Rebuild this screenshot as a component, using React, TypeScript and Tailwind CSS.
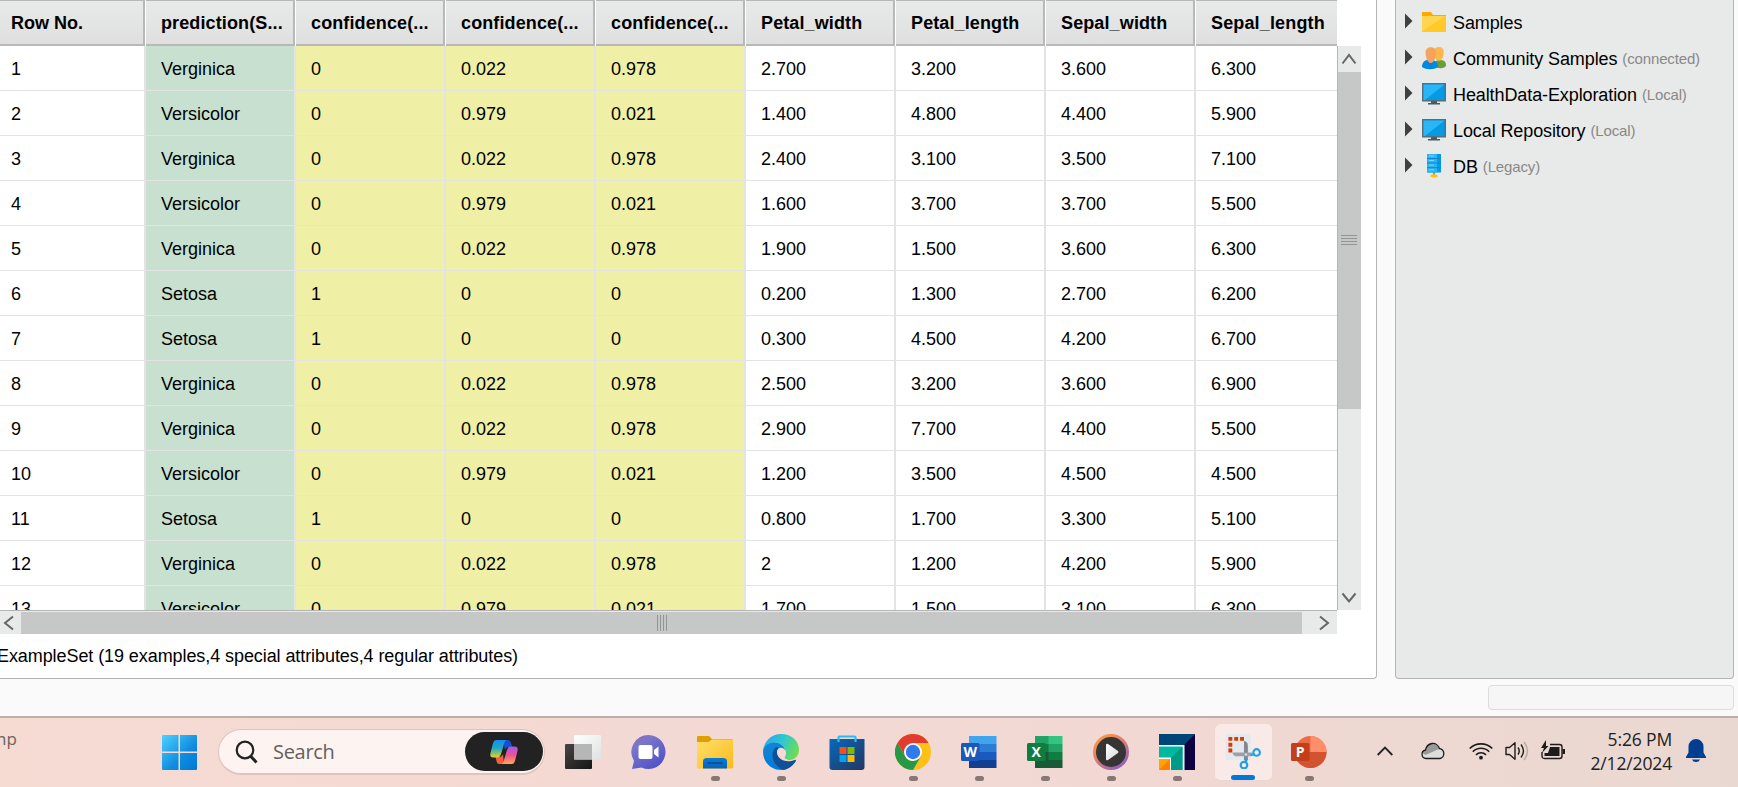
import React from 'react';

const HEADERS = ['Row No.', 'prediction(S...', 'confidence(...', 'confidence(...', 'confidence(...', 'Petal_width', 'Petal_length', 'Sepal_width', 'Sepal_length'];

const ROWS: string[][] = [
  ['1', 'Verginica', '0', '0.022', '0.978', '2.700', '3.200', '3.600', '6.300'],
  ['2', 'Versicolor', '0', '0.979', '0.021', '1.400', '4.800', '4.400', '5.900'],
  ['3', 'Verginica', '0', '0.022', '0.978', '2.400', '3.100', '3.500', '7.100'],
  ['4', 'Versicolor', '0', '0.979', '0.021', '1.600', '3.700', '3.700', '5.500'],
  ['5', 'Verginica', '0', '0.022', '0.978', '1.900', '1.500', '3.600', '6.300'],
  ['6', 'Setosa', '1', '0', '0', '0.200', '1.300', '2.700', '6.200'],
  ['7', 'Setosa', '1', '0', '0', '0.300', '4.500', '4.200', '6.700'],
  ['8', 'Verginica', '0', '0.022', '0.978', '2.500', '3.200', '3.600', '6.900'],
  ['9', 'Verginica', '0', '0.022', '0.978', '2.900', '7.700', '4.400', '5.500'],
  ['10', 'Versicolor', '0', '0.979', '0.021', '1.200', '3.500', '4.500', '4.500'],
  ['11', 'Setosa', '1', '0', '0', '0.800', '1.700', '3.300', '5.100'],
  ['12', 'Verginica', '0', '0.022', '0.978', '2', '1.200', '4.200', '5.900'],
  ['13', 'Versicolor', '0', '0.979', '0.021', '1.700', '1.500', '3.100', '6.300'],
];

function cellColor(col: number) {
  if (col === 1) return 'bg-[#c7e0cf]';
  if (col >= 2 && col <= 4) return 'bg-[#efefa5]';
  return 'bg-white';
}

function Arrow({ d }: { d: string }) {
  return (
    <svg width="16" height="16" viewBox="0 0 16 16" fill="none" stroke="#666" strokeWidth="2">
      <path d={d} />
    </svg>
  );
}

function DataTable() {
  return (
    <div className="flex h-[634px] w-[1362px]">
      <div className="w-[1337px] shrink-0 overflow-hidden">
        <div className="flex h-[46px] w-[1346px]">
          {HEADERS.map((h, i) => (
            <div key={i} className={`flex shrink-0 ${i === 0 ? 'w-[146px]' : 'w-[150px]'} border-r border-white`}>
              <div
                className={`flex h-[46px] flex-1 items-center border-t border-r-2 border-b-2 border-[#b8b8b8] bg-linear-to-b from-[#e8eaea] to-[#dfdfdf] pt-[2px] text-[18px] font-bold whitespace-nowrap ${
                  i === 0 ? 'pl-[11px]' : i === 8 ? 'pl-[15px] tracking-[0.15px]' : 'pl-[15px] tracking-[0.12px]'
                }`}
              >
                {h}
              </div>
            </div>
          ))}
        </div>
        <div className="h-[564px] w-[1346px] overflow-hidden">
          {ROWS.map((r, ri) => (
            <div key={ri} className="flex h-[45px]">
              {r.map((c, ci) => (
                <div
                  key={ci}
                  className={`flex shrink-0 items-center border-r-2 border-b border-[#e3e3e3] pt-[2px] text-[18px] ${
                    ci === 0 ? 'w-[146px] pl-[11px]' : 'w-[150px] pl-[15px]'
                  } ${cellColor(ci)}`}
                >
                  {c}
                </div>
              ))}
            </div>
          ))}
        </div>
        <div className="flex h-[24px] border-t border-[#b4b4b4] bg-[#e8eaea] pt-px">
          <div className="flex w-[21px] items-center">
            <Arrow d="M13 1.5L5 8l8 6.5" />
          </div>
          <div className="flex h-[22px] w-[1281px] items-center justify-center gap-[2px] bg-[#c6c8c7]">
            {[0, 1, 2, 3].map((n) => (
              <span key={n} className="h-4 w-px bg-[#939595]" />
            ))}
          </div>
          <div className="flex flex-1 items-center pl-[15px]">
            <Arrow d="M3 1.5L11 8l-8 6.5" />
          </div>
        </div>
      </div>
      <div className="mt-[46px] flex h-[564px] w-[24px] flex-col border-l border-[#b4b4b4] bg-[#e8eaea]">
        <div className="flex h-[26px] items-center pl-[3px]">
          <Arrow d="M1.5 12.500L8 4l6.500 8.500" />
        </div>
        <div className="flex h-[337px] flex-col gap-[2px] bg-[#c6c8c7] pt-[163px] pl-[3px]">
          {[0, 1, 2, 3].map((n) => (
            <span key={n} className="h-px w-4 bg-[#939595]" />
          ))}
        </div>
        <div className="flex flex-1 items-end pb-1 pl-[3px]">
          <Arrow d="M1.500 3.500L8 11.500l6.500-8" />
        </div>
      </div>
    </div>
  );
}

function FolderSmall() {
  return (
    <svg width="24" height="22" viewBox="0 0 24 22">
      <path d="M0 1h9l2 3h13v5H0z" fill="#ffa900" />
      <path d="M0 5h24v16H0z" fill="#ffca28" />
      <path d="M0 5h23L1 20H0z" fill="#ffd54f" />
    </svg>
  );
}

function People() {
  return (
    <svg width="24" height="24" viewBox="0 0 24 24">
      <path d="M12 20c0-5 3-6 6-6s6 1 6 5c0 3-5 3.500-8 3z" fill="#689f38" />
      <path d="M12 4C13-.3 21.500-.3 21.700 5c.3 5-1.200 8-3.200 9.500C16 15.500 12.500 13 12 10z" fill="#ffb74d" />
      <path d="M0 21c0-5 3-6.500 5-7h6c3 1 5 2.500 5 7-4 3-12 3-16 0z" fill="#0288e0" />
      <path d="M3.500 6C3.500-.5 14-.5 14 6c0 5-2 11-5.200 11S3.500 11 3.500 6z" fill="#f8a35c" />
    </svg>
  );
}

function Monitor() {
  return (
    <svg width="24" height="22" viewBox="0 0 24 22">
      <path d="M9 18h6v2h3v1.500H6V20h3z" fill="#455a64" />
      <path d="M0 0h24v18.500H0z" fill="#546e7a" />
      <path d="M1.500 1.500h21v15.500h-21z" fill="#039be5" />
      <path d="M1.500 1.500h21L3 17H1.500z" fill="#29b6f6" />
    </svg>
  );
}

function Database() {
  return (
    <svg width="24" height="24" viewBox="0 0 24 24">
      <path d="M12 18v4" stroke="#607d8b" strokeWidth="1.500" />
      <path d="M5 0h14v18.500H5z" fill="#039be5" />
      <path d="M5 0h10v18.500H5z" fill="#29b6f6" />
      <path d="M5 4.500h14M5 9h14M5 13.700h14" stroke="#0b86cc" />
      <path d="M7 2h5M7 6.500h5M7 11h5M7 15.800h5" stroke="#81d4fa" />
      <path d="M8 22c2-2.500 6-2.500 8 0-2 2-6 2-8 0z" fill="#ffc107" />
    </svg>
  );
}

const REPOS = [
  { name: 'Samples', note: '', icon: <FolderSmall /> },
  { name: 'Community Samples', note: '(connected)', icon: <People /> },
  { name: 'HealthData-Exploration', note: '(Local)', icon: <Monitor /> },
  { name: 'Local Repository', note: '(Local)', icon: <Monitor /> },
  { name: 'DB', note: '(Legacy)', icon: <Database /> },
];

function RepositoryPanel() {
  return (
    <div className="h-[679px] w-[339px] rounded-b-[4px] border border-t-0 border-[#b4b4b4] bg-[#e8eae9] pt-[4px] pl-[9px]">
      {REPOS.map((r) => (
        <div key={r.name} className="flex h-[36px] items-center whitespace-nowrap">
          <svg width="8" height="16" viewBox="0 0 8 16" className="mb-[3px]">
            <path d="M0 .5L7.500 8 0 15.500z" fill="#404040" />
          </svg>
          <span className="ml-[9px] flex w-[24px] justify-center">{r.icon}</span>
          <span className="ml-[7px] pt-[2px] text-[18px] tracking-[-0.1px]">{r.name}</span>
          <span className="ml-[5px] pt-[3px] text-[15px] tracking-[-0.15px] text-[#888]">{r.note}</span>
        </div>
      ))}
    </div>
  );
}

function TaskView() {
  return (
    <svg width="36" height="36" viewBox="0 0 36 36">
      <defs>
        <linearGradient id="tv1" x1="0" y1="0" x2="1" y2="1"><stop stopColor="#484644" /><stop offset="1" stopColor="#151515" /></linearGradient>
        <linearGradient id="tv2" x1="0" y1="0" x2="1" y2="1"><stop stopColor="#fff" /><stop offset="1" stopColor="#dfe2e2" /></linearGradient>
      </defs>
      <rect y="10" width="27" height="25" rx="1" fill="url(#tv1)" />
      <rect x="9" y="1" width="27" height="24.500" rx="1" fill="url(#tv2)" />
      <path d="M9 10h18v15.500H9z" fill="#b6b6b6" />
    </svg>
  );
}

function Chat() {
  return (
    <svg width="36" height="36" viewBox="0 0 36 36">
      <defs><linearGradient id="ch" x1="0" y1="0" x2=".7" y2="1"><stop stopColor="#946aa9" /><stop offset=".3" stopColor="#7a76cb" /><stop offset="1" stopColor="#4f52c8" /></linearGradient></defs>
      <path d="M17.500 1a17 17 0 1 1-7 32.500L1 35l2-8A17 17 0 0 1 17.500 1z" fill="url(#ch)" />
      <rect x="7.500" y="11" width="14" height="14" rx="2" fill="#fff" />
      <path d="M23 16l4.500-3.500v11L23 20z" fill="#fff" />
    </svg>
  );
}

function Explorer() {
  return (
    <svg width="36" height="36" viewBox="0 0 36 36">
      <defs><linearGradient id="fe" x1="0" y1="0" x2="1" y2="1"><stop stopColor="#ffe06c" /><stop offset="1" stopColor="#fcb918" /></linearGradient><linearGradient id="fb" x1="0" y1="0" x2="0" y2="1"><stop stopColor="#0b7bd6" /><stop offset="1" stopColor="#0962b8" /></linearGradient></defs>
      <path d="M0 3q0-1 1-1h11l3 3h19q2 0 2 2v8H0z" fill="#dfa000" />
      <path d="M0 8h11.500L15 5.500h21v28q0 1-1 1H1q-1 0-1-1z" fill="url(#fe)" />
      <path d="M6 34.500v-7q0-3.500 3.500-3.500h17q3.500 0 3.500 3.500v7z" fill="url(#fb)" />
      <path d="M11 29h14" stroke="#084a91" strokeWidth="1.500" strokeLinecap="round" />
    </svg>
  );
}

function Edge() {
  return (
    <svg width="36" height="36" viewBox="0 0 36 36">
      <defs>
        <linearGradient id="eg1" x1="0" y1=".2" x2="1" y2=".6"><stop stopColor="#2aa5ea" /><stop offset=".5" stopColor="#30c8cf" /><stop offset="1" stopColor="#6ede4c" /></linearGradient>
        <linearGradient id="eg2" x1="0" y1="0" x2=".5" y2="1"><stop stopColor="#1686d7" /><stop offset="1" stopColor="#0078d7" /></linearGradient>
      </defs>
      <path d="M0 18C0 12 5 8 11 8c6 0 11 3.500 11 8.500-2-3-7-3.500-8 1-1.500 7 6 13 18.500 9.500-3 5.500-8.500 9-14.500 9C8 36 0 28 0 18z" fill="url(#eg2)" />
      <path d="M12 14c-5 6-2.500 18 8.500 21.900 5-.9 9.500-4 12.500-9.200 0-.8-.6-1-1.300-.7C22 30 13.500 24.500 14 17.500c.2-2 1-3 2-4-1.500-.3-3-.2-4 .5z" fill="#114f96" />
      <path d="M0 17C1 7 8.500 0 18 0c11 0 18 7.500 18 15.500 0 6-4 10.500-9.500 10.500-5 0-6-1.700-4.500-3.500 1.600-2 1.400-4 .5-6C20.500 11.500 16.500 8.500 11 8.500 5 8.500 1 12 0 17z" fill="url(#eg1)" />
      <path d="M18 13.800c3.500 0 5.500 4 3.700 7.700-1.300 2.500 1 4 4.300 4.300-5 1.200-10.500-1.800-11.600-6-.9-3.300.9-6 3.600-6z" fill="#f4dad4" />
    </svg>
  );
}

function Store() {
  return (
    <svg width="36" height="36" viewBox="0 0 36 36">
      <defs><linearGradient id="st" x1="0" y1="0" x2="1" y2="1"><stop stopColor="#0669bd" /><stop offset="1" stopColor="#24365f" /></linearGradient></defs>
      <path d="M.5 5h35v28q0 3-3 3h-29q-3 0-3-3z" fill="url(#st)" />
      <path d="M9.500 8V3.500q0-1 1-1h15q1 0 1 1V8" fill="none" stroke="#27bdee" strokeWidth="2.200" />
      <path d="M10.500 13h7v7h-7z" fill="#f25022" /><path d="M18.500 13h7v7h-7z" fill="#7fba00" />
      <path d="M10.500 21h7v7h-7z" fill="#00a4ef" /><path d="M18.500 21h7v7h-7z" fill="#ffb900" />
    </svg>
  );
}

function Chrome() {
  return (
    <svg width="36" height="36" viewBox="0 0 36 36">
      <circle cx="18" cy="18" r="18" fill="#fbc116" />
      <path d="M18 9h15.600A18 18 0 0 0 2.400 9l7.800 13.500z" fill="#e33b2e" />
      <path d="M2.400 9A18 18 0 0 0 18 36l7.800-13.500L18 27a9 9 0 0 1-7.800-4.500z" fill="#279847" />
      <circle cx="18" cy="18" r="9" fill="#fff" /><circle cx="18" cy="18" r="7.200" fill="#2f7bed" />
    </svg>
  );
}

function OfficeDoc({ letter, colors, tile, split }: { letter: string; colors: string[]; tile: string; split?: boolean }) {
  return (
    <svg width="36" height="36" viewBox="0 0 36 36">
      {colors.map((c, i) => (
        <rect key={i} x="8" y={2 + i * 8} width="27.500" height="8" fill={c} />
      ))}
      {split && (
        <>
          <path d="M8 2h13.500v8H8z" fill="#21a366" />
          <path d="M8 10h13.500v8H8z" fill="#107c41" />
          <path d="M8 18h13.500v16H8z" fill="#185c37" />
        </>
      )}
      <rect y="9" width="18.500" height="18" rx="1.500" fill={tile} />
      <text x="9.200" y="23.200" textAnchor="middle" fontFamily="Open Sans, sans-serif" fontWeight="700" fontSize="14" fill="#fff">{letter}</text>
    </svg>
  );
}

function Media() {
  return (
    <svg width="36" height="36" viewBox="0 0 36 36">
      <defs>
        <linearGradient id="md" x1=".1" y1="0" x2=".8" y2="1"><stop stopColor="#ff9b3d" /><stop offset=".4" stopColor="#e38365" /><stop offset="1" stopColor="#8a5cc4" /></linearGradient>
        <linearGradient id="mp" x1="0" y1="0" x2="1" y2="1"><stop stopColor="#fff" /><stop offset="1" stopColor="#d8d8d8" /></linearGradient>
      </defs>
      <circle cx="18" cy="18" r="18" fill="url(#md)" /><circle cx="18" cy="18" r="15" fill="#353535" />
      <path d="M13 11q0-2 2-1l10 7q1 1 0 2l-10 7q-2 1-2-1z" fill="url(#mp)" />
    </svg>
  );
}

function Tiles() {
  return (
    <svg width="36" height="36" viewBox="0 0 36 36">
      <path d="M0 0h36v36H0z" fill="#004578" /><path d="M36 0v36H25V11z" fill="#0f0041" />
      <path d="M0 11h25.500v25H0z" fill="#fff" />
      <path d="M0 12.500h23.500v23.500H0z" fill="#00b8a0" /><path d="M23.500 12.500V36H12V24z" fill="#009b86" />
      <path d="M0 23.500h12V36H0z" fill="#fff" />
      <path d="M0 25h11v11H0z" fill="#ffa400" /><path d="M11 25v11H0z" fill="#ff7f00" />
    </svg>
  );
}

function Snip() {
  return (
    <svg width="36" height="36" viewBox="0 0 36 36">
      <rect width="26" height="27" rx="2" fill="#e5e9ed" />
      <path d="M3 3h4v4H3zM9 3h4v4H9zM15 3h4v4h-4zM3 9h4v4H3zM3 15h4v4H3z" fill="#d83b01" />
      <path d="M19 7q4 1 4 5v15h-4z" fill="#808890" />
      <path d="M7 19h20v4H12q-4 0-5-4z" fill="#9aa2a8" />
      <circle cx="21" cy="21" r="1.200" fill="#dce0e2" />
      <circle cx="32" cy="19" r="3.400" fill="none" stroke="#1da1ea" strokeWidth="2.200" />
      <circle cx="19" cy="32" r="3.400" fill="none" stroke="#1da1ea" strokeWidth="2.200" />
      <path d="M26 21.500l4-.5M21.500 25L21 29" stroke="#1da1ea" strokeWidth="2.400" />
    </svg>
  );
}

function PowerPoint() {
  return (
    <svg width="36" height="36" viewBox="0 0 36 36">
      <circle cx="19.500" cy="18" r="16" fill="#ed6c47" />
      <path d="M19.500 2a16 16 0 0 1 16 16h-16z" fill="#ff8f6b" />
      <path d="M3.500 18h32a16 16 0 0 1-32 0z" fill="#d35230" />
      <rect y="9" width="18.500" height="18" rx="1.500" fill="#c43e1c" />
      <text x="9.200" y="23.200" textAnchor="middle" fontFamily="Open Sans, sans-serif" fontWeight="700" fontSize="14" fill="#fff">P</text>
    </svg>
  );
}

const APPS = [
  { icon: <TaskView />, mark: false },
  { icon: <Chat />, mark: false },
  { icon: <Explorer />, mark: true },
  { icon: <Edge />, mark: true },
  { icon: <Store />, mark: false },
  { icon: <Chrome />, mark: true },
  { icon: <OfficeDoc letter="W" colors={['#41a5ee', '#2b7cd3', '#185abd', '#103f91']} tile="#1c57bd" />, mark: true },
  { icon: <OfficeDoc letter="X" colors={['#33c481', '#21a366', '#107c41', '#185c37']} tile="#107c41" split />, mark: true },
  { icon: <Media />, mark: true },
  { icon: <Tiles />, mark: true },
  { icon: <Snip />, mark: true, active: true },
  { icon: <PowerPoint />, mark: true },
];

function Copilot() {
  return (
    <svg width="28" height="26" viewBox="0 0 28 26">
      <defs>
        <linearGradient id="cp1" x1="0" y1="0" x2="0" y2="1"><stop stopColor="#188df0" /><stop offset=".45" stopColor="#1da7c9" /><stop offset="1" stopColor="#e8d128" /></linearGradient>
        <linearGradient id="cp2" x1="0" y1="0" x2="0" y2="1"><stop stopColor="#a356f0" /><stop offset=".5" stopColor="#ee5490" /><stop offset="1" stopColor="#ffa850" /></linearGradient>
      </defs>
      <path d="M13 1h5q2 0 3 3l1.500 4H19q-3 0-4 3z" fill="#1550d0" />
      <path d="M14 25H9q-2 0-2.500-3L5.500 18H9q3 0 4-3z" fill="#f5603c" />
      <path d="M6 1h11q-2 0-3 4l-3 10q-1 3.500-4 3.500H3Q-.5 18.500.5 14L3 4q1-3 3-3z" fill="url(#cp1)" />
      <path d="M22 25H11q2 0 3-4l3-10q1-3.500 4-3.500h4q3.500 0 2.500 4.500L25 22q-1 3-3 3z" fill="url(#cp2)" />
    </svg>
  );
}

function Taskbar() {
  return (
    <div className="flex h-[71px] w-full border-t-2 border-[#bdaea9] bg-linear-to-r from-[#f6dbd3] via-[#f2d8d3] via-65% to-[#e9d8d1] font-['Open_Sans',sans-serif]">
      <div className="flex w-[162px] pt-[9px]">
        <span className="-ml-[4px] text-[17px] leading-[24px] text-[#6c6260]">np</span>
      </div>
      <div className="flex w-[35px] pt-[17px]">
        <svg width="35" height="35" viewBox="0 0 35 35">
          <defs><linearGradient id="win" x1="0" y1="0" x2="1" y2="1"><stop stopColor="#4fd0ff" /><stop offset=".6" stopColor="#0f8ce0" /><stop offset="1" stopColor="#0078d4" /></linearGradient></defs>
          <path d="M1 0h15.500v16.500H0V1q0-1 1-1zM18 0h16q1 0 1 1v15.500H18zM0 18h16.500v17H1q-1 0-1-1zM18 18h17v16q0 1-1 1H18z" fill="url(#win)" />
        </svg>
      </div>
      <div className="mt-[11px] ml-[21px] flex h-[46px] w-[327px] items-center rounded-full border border-b-2 border-[#dfc4be] bg-[#fdf4f2] pl-[16px]">
        <svg width="23" height="24" viewBox="0 0 23 24" fill="none" stroke="#222" strokeWidth="2.200">
          <circle cx="10" cy="10" r="8.300" /><path d="M15.500 16l6 6.500" strokeWidth="3" />
        </svg>
        <span className="ml-[15px] w-[192px] text-[20px] tracking-[-0.3px] text-[#655f5e]">Search</span>
        <div className="flex h-[39px] w-[78px] items-center justify-center rounded-full bg-[#222]">
          <Copilot />
        </div>
      </div>
      <div className="ml-[5px] flex">
        {APPS.map((a, i) => (
          <div key={i} className="flex w-[66px] justify-center">
            <div className={`mt-[6px] flex h-[58px] w-[57px] flex-col items-center rounded-[6px] pt-[10px] ${a.active ? 'border-b-2 border-[#ecd6d2] bg-[#f9eae8]' : ''}`}>
              {a.icon}
              {a.mark && <span className={`mt-[6px] h-[5px] shrink-0 rounded-full ${a.active ? 'w-[24px] bg-[#0078d7]' : 'w-[9px] bg-[#857875]'}`} />}
            </div>
          </div>
        ))}
      </div>
      <div className="ml-[35px] flex h-[66px] items-center">
        <svg width="16" height="10" viewBox="0 0 16 10" fill="none" stroke="#222" strokeWidth="1.800"><path d="M.7 9L8 1.500 15.300 9" /></svg>
        <svg width="24" height="18" viewBox="0 0 24 18" className="ml-[28px]">
          <path d="M5 16.500a4.300 4.300 0 0 1-.5-8.500A8 8 0 0 1 11 1.500a7 7 0 0 1 7.500 5.200A5 5 0 0 1 19 16.500z" fill="#ddd" />
          <path d="M1.500 11q0-3 3-3A8 8 0 0 1 11 1.500a7 7 0 0 1 7.500 5.200L4.500 13z" fill="#999" />
          <path d="M5 16.500a4.300 4.300 0 0 1-.5-8.500A8 8 0 0 1 11 1.500a7 7 0 0 1 7.500 5.200A5 5 0 0 1 19 16.500z" fill="none" stroke="#1c1c1c" strokeWidth="1.300" />
        </svg>
        <svg width="24" height="18" viewBox="0 0 24 18" className="ml-[24px]" fill="none" stroke="#1c1c1c" strokeWidth="1.600">
          <path d="M.7 6.500a16 16 0 0 1 22.600 0M3.800 9.700a11.600 11.600 0 0 1 16.400 0M7 12.900a7 7 0 0 1 10 0" /><circle cx="12" cy="15.700" r="1.900" fill="#1c1c1c" stroke="none" />
        </svg>
        <svg width="25" height="20" viewBox="0 0 25 20" className="ml-[12px]" fill="none" stroke="#1c1c1c" strokeWidth="1.400">
          <path d="M1 6.500h3.500L10 1.700v16.600l-5.500-4.800H1z" strokeLinejoin="round" /><path d="M13 6.500q2.500 3.500 0 7M16 3.500q5 6.500 0 13" /><path d="M19 1q7 9 0 18" stroke="#b7a8a5" />
        </svg>
        <svg width="25" height="20" viewBox="0 0 25 20" className="mb-[3px] ml-[11px]">
          <path d="M9 4.500h9.500q2.500 0 2.500 2.500v9q0 2.500-2.500 2.500h-15Q1 18.500 1 16v-4" fill="none" stroke="#1c1c1c" strokeWidth="1.400" />
          <path d="M9 7h9.500v9h-15v-3H7zM21.500 9H24v5h-2.500z" fill="#1c1c1c" /><path d="M5 0L0 8h3l-2 5 6.500-7H5z" fill="#1c1c1c" />
        </svg>
        <div className="ml-[10px] flex w-[96px] flex-col items-end text-[17.500px] leading-[24px] tracking-[-0.15px] whitespace-nowrap text-[#222]">
          <span>5:26 PM</span>
          <span>2/12/2024</span>
        </div>
        <svg width="20" height="24" viewBox="0 0 20 24" className="ml-[14px]" fill="#003e92">
          <path d="M10 0a7.500 7.500 0 0 1 7.500 7.500v6L20 18v1H0v-1l2.500-4.500v-6A7.500 7.500 0 0 1 10 0zM6 20.500h8q-1 2.500-4 2.500t-4-2.500z" />
        </svg>
      </div>
    </div>
  );
}

export default function App() {
  return (
    <div className="flex h-[787px] w-[1738px] flex-col overflow-hidden bg-[#fafafa] font-['Liberation_Sans',Arial,sans-serif] text-black">
      <div className="flex h-[716px] flex-col">
        <div className="flex gap-[18px]">
          <div className="h-[679px] w-[1377px] shrink-0 rounded-br-[4px] border-r border-b border-[#b4b4b4] bg-white">
            <DataTable />
            <div className="-ml-[3px] flex h-[44px] items-center pt-[1px] text-[18px] tracking-[-0.08px]">ExampleSet (19 examples,4 special attributes,4 regular attributes)</div>
          </div>
          <RepositoryPanel />
        </div>
        <div className="mt-[6px] ml-[1488px] h-[25px] w-[246px] rounded-[4px] border border-[#dcdcdc] bg-[#f6f6f6]" />
      </div>
      <Taskbar />
    </div>
  );
}
